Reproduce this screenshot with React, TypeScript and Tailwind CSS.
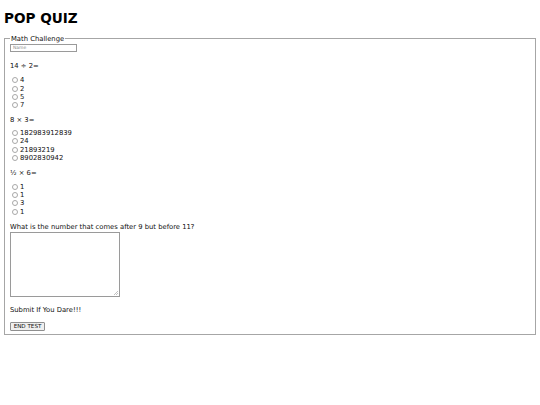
import React from "react";

const font = { fontFamily: '"DejaVu Sans", Verdana, sans-serif' };

function Radio({ label }: { label: string }) {
  return (
    <div className="flex items-center h-[8.33px]">
      <span className="inline-block w-[6px] h-[6px] rounded-full border border-[#a8a8a8] bg-white ml-[2px] mr-[2px]" />
      <span>{label}</span>
    </div>
  );
}

export default function App() {
  const q = (opts: string[]) => (
    <div className="flex flex-col">
      {opts.map((o, i) => (
        <Radio key={i} label={o} />
      ))}
    </div>
  );
  return (
    <div className="w-[540px] h-[405px] bg-white text-[#111] p-[4px]" style={font}>
      <h1 className="text-[13.6px] font-bold leading-none mt-[8px] mb-[9px] text-black">POP QUIZ</h1>
      <fieldset className="border border-[#a6a6a6] mx-0 px-[5px] pt-0 pb-[3px] min-w-0 text-[6.8px] leading-[8.33px]">
        <legend className="px-[1px] text-[6.8px]">Math Challenge</legend>
        <div className="w-[67px] h-[8px] border border-[#9a9a9a] bg-white text-[4.5px] leading-[6px] text-[#8a8a8a] pl-[2px] mt-[1px]">
          Name
        </div>
        <p className="mt-[10px] mb-[6px]">14 ÷ 2=</p>
        {q(["4", "2", "5", "7"])}
        <p className="mt-[6px] mb-[5px]">8 × 3=</p>
        {q(["182983912839", "24", "21893219", "8902830942"])}
        <p className="mt-[7px] mb-[5px]">½ × 6=</p>
        {q(["1", "1", "3", "1"])}
        <p className="mt-[7px] mb-[1px]">What is the number that comes after 9 but before 11?</p>
        <div className="relative w-[110px] h-[65px] border border-[#9a9a9a] bg-white">
          <svg className="absolute right-[1px] bottom-[1px]" width="4" height="4" viewBox="0 0 4 4">
            <path d="M0 4 L4 0 M2 4 L4 2" stroke="#999" strokeWidth="0.6" />
          </svg>
        </div>
        <p className="mt-[9px] mb-[7px]">Submit If You Dare!!!</p>
        <div className="inline-flex items-center justify-center w-[35px] h-[9px] border border-[#8f8f8f] rounded-[1px] bg-[#efefef] text-[5.6px] leading-none">
          END TEST
        </div>
      </fieldset>
    </div>
  );
}
